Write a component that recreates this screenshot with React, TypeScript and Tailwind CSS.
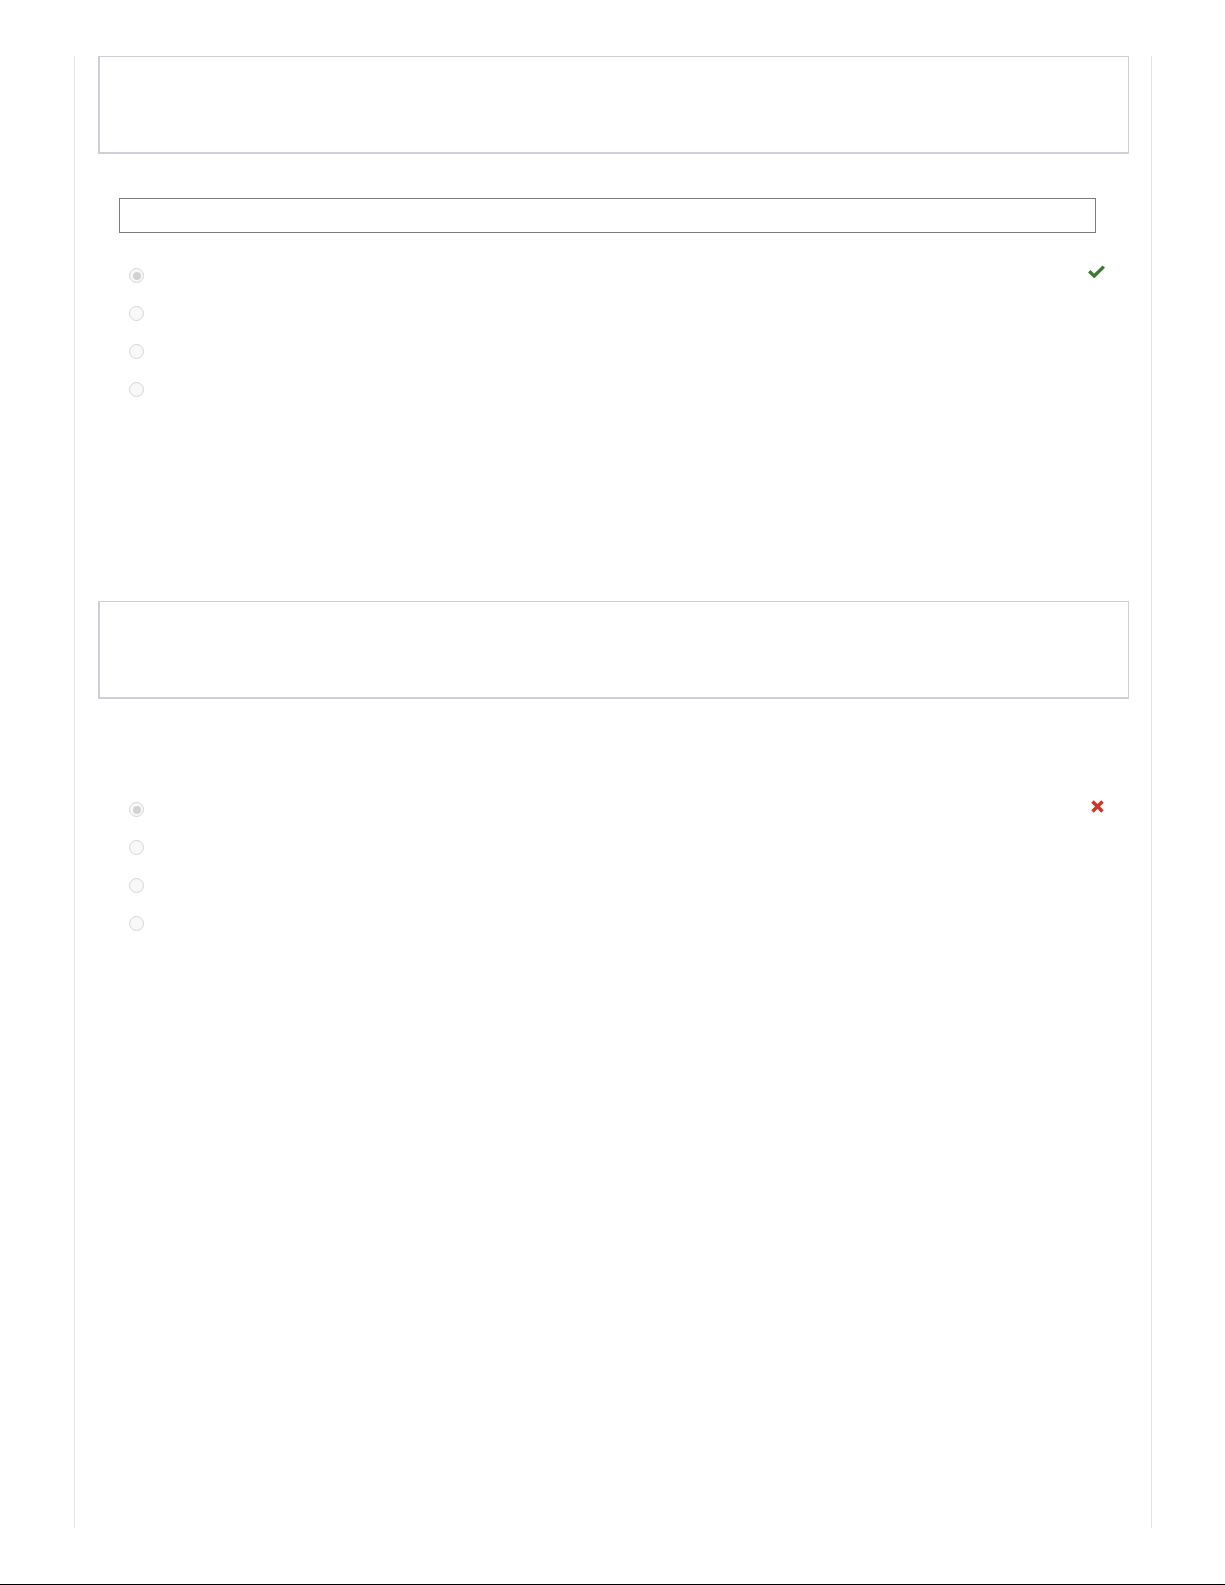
import React from "react";

function Radio({ checked }: { checked?: boolean }) {
  return (
    <div className="w-[15px] h-[15px] rounded-full border border-[#d5d5d5] bg-[#f8f8f8] flex items-center justify-center shrink-0">
      {checked && <div className="w-[8px] h-[8px] rounded-full bg-[#d2d2d2]" />}
    </div>
  );
}

function CheckIcon() {
  return (
    <svg viewBox="0 0 17 13" className="w-[17px] h-[13px] mt-[-3px]" fill="none">
      <path d="M1.2 6.3 L6.2 11 L15.8 1.6" stroke="#3b7a33" strokeWidth="3.4" strokeLinejoin="miter" />
    </svg>
  );
}

function CrossIcon() {
  return (
    <svg viewBox="0 0 13 13" className="w-[13px] h-[13px] mt-[-2px] mr-[1px]" fill="none">
      <path d="M1.5 1.5 L11.5 11.5 M11.5 1.5 L1.5 11.5" stroke="#cf3526" strokeWidth="3.4" />
    </svg>
  );
}

function Options({ mark }: { mark: "ok" | "bad" }) {
  return (
    <div className="flex flex-col gap-[23px]">
      {[0, 1, 2, 3].map((i) => (
        <div key={i} className="flex items-start justify-between pl-[31px] pr-[24px] h-[15px]">
          <Radio checked={i === 0} />
          {i === 0 && (mark === "ok" ? <CheckIcon /> : <CrossIcon />)}
        </div>
      ))}
    </div>
  );
}

function Box() {
  return (
    <div className="h-[98px] border-t border-r border-l-2 border-b-2 border-[#cdd1d7] bg-white" />
  );
}

export default function App() {
  return (
    <div className="w-[1225px] h-[1585px] bg-white flex flex-col" style={{ fontFamily: '"Liberation Sans", Arial, sans-serif' }}>
      <div className="pt-[56px]">
        <div className="ml-[74px] w-[1078px] h-[1472px] border-l border-r border-[#e4e4e4] pl-[23px] pr-[22px]">
          <Box />
          <div className="mt-[44px] ml-[21px] w-[977px] h-[35px] border border-[#7a7a7a]" />
          <div className="mt-[35px]">
            <Options mark="ok" />
          </div>
          <div className="mt-[204px]">
            <Box />
          </div>
          <div className="mt-[103px]">
            <Options mark="bad" />
          </div>
        </div>
      </div>
      <div className="flex-1" />
      <div className="h-px bg-black" />
    </div>
  );
}
